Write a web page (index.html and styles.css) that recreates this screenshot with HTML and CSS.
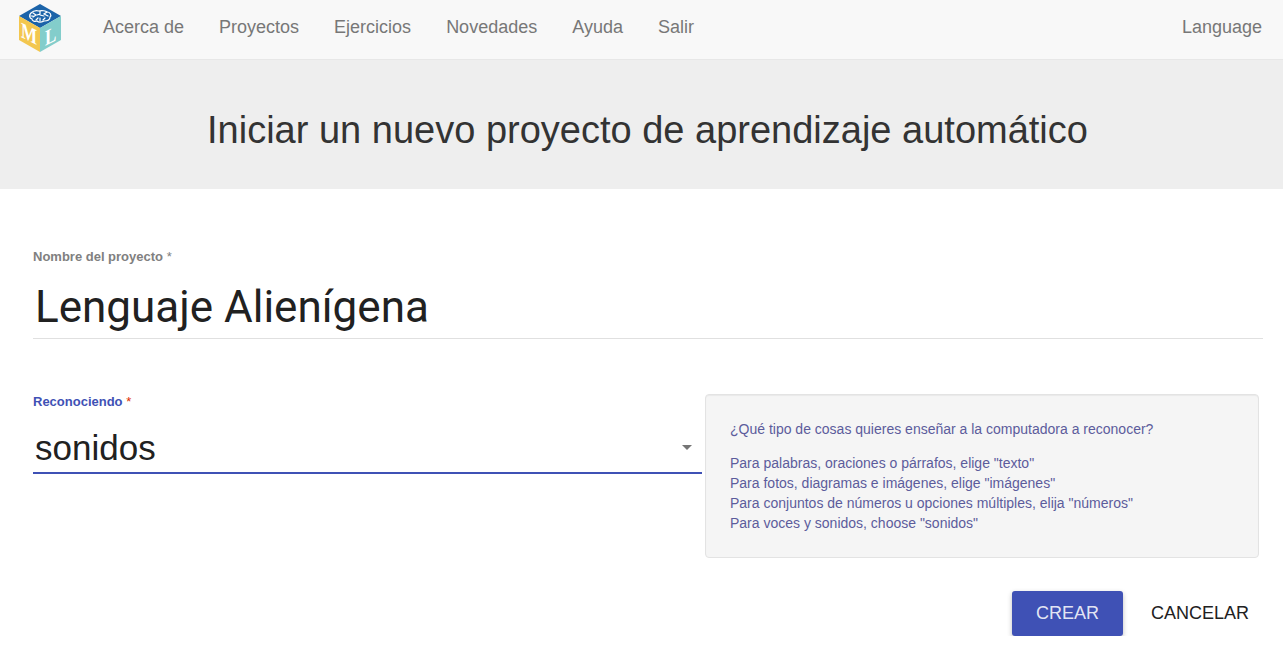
FILE: index.html
```html
<!DOCTYPE html>
<html lang="es">
<head>
<meta charset="utf-8">
<title>Iniciar un nuevo proyecto</title>
<link rel="stylesheet" href="styles.css">
</head>
<body>
<nav class="navbar">
  <a class="brand" href="#" aria-label="Inicio">
    <svg width="44" height="50" viewBox="0 0 44 50">
      <path fill="#1b63a9" d="M22 1 43 13 22 25 1 13Z"/>
      <path fill="#f3c74f" d="M1 13 22 25V49L1 37Z"/>
      <path fill="#83cdcb" d="M43 13 22 25V49L43 37Z"/>
      <g fill="none" stroke="#fff" stroke-width="1.2" stroke-linecap="round">
        <path d="M14 16c-3-1-3-4-1-6 2-2 5-3 8-2 3-1 7 0 8 1 3 0 5 3 3 5 0 3-3 4-6 4-2 1-5 2-7 0-2 1-5 0-5-2Z"/>
        <path d="M22 8v3l-3 1M22 12l4 1M22 15v3M15 10l3 2-3 2M18 17l2-2M29 9l-3 2 4 2M25 17l2-2M12 13h3"/>
      </g>
      <g class="logo-letters">
        <text transform="matrix(1 .5 0 1.3 3 34)">M</text>
        <text transform="matrix(1 -.5 0 1.3 27 43)">L</text>
      </g>
    </svg>
  </a>
  <a class="nav-link" href="#">Acerca de</a>
  <a class="nav-link" href="#">Proyectos</a>
  <a class="nav-link" href="#">Ejercicios</a>
  <a class="nav-link" href="#">Novedades</a>
  <a class="nav-link" href="#">Ayuda</a>
  <a class="nav-link" href="#">Salir</a>
  <a class="nav-link language" href="#">Language</a>
</nav>
<header class="banner">
  <h1 class="title">Iniciar un nuevo proyecto de aprendizaje automático</h1>
</header>
<form class="project-form">
  <div class="field">
    <label class="label" for="name">Nombre del proyecto <span class="star">*</span></label>
    <input class="name-input" id="name" type="text" value="Lenguaje Alienígena">
  </div>
  <div class="type-row">
    <div class="field">
      <label class="label label-active" for="type">Reconociendo <span class="star star-red">*</span></label>
      <div class="select-box">
        <select class="type-select" id="type">
          <option>sonidos</option>
        </select>
        <svg class="arrow" width="10" height="5" viewBox="0 0 10 5"><path fill="#757575" d="M0 0h10L5 5Z"/></svg>
      </div>
    </div>
    <div class="help">
      <p class="help-text">¿Qué tipo de cosas quieres enseñar a la computadora a reconocer?</p>
      <p class="help-text">Para palabras, oraciones o párrafos, elige "texto"<br>Para fotos, diagramas e imágenes, elige "imágenes"<br>Para conjuntos de números u opciones múltiples, elija "números"<br>Para voces y sonidos, choose "sonidos"</p>
    </div>
  </div>
  <div class="actions">
    <button class="button primary" type="submit">CREAR</button>
    <button class="button" type="button">CANCELAR</button>
  </div>
</form>
</body>
</html>
```
FILE: styles.css
```css
* { box-sizing: border-box; }

body {
  margin: 0;
  background: #fff;
  color: #333;
  font-family: "Liberation Sans", Arial, sans-serif;
  font-size: 14px;
  line-height: 20px;
}

.navbar {
  display: flex;
  align-items: flex-start;
  gap: 35px;
  height: 60px;
  padding: 3px 21px 0 18px;
  background: #f8f8f8;
  border-bottom: 1px solid #e7e7e7;
}

.brand { display: block; height: 50px; margin-right: 6px; }

.logo-letters {
  fill: #fff;
  font-family: "Liberation Serif", serif;
  font-size: 17px;
  font-weight: bold;
}

.nav-link {
  padding-top: 14px;
  color: #777;
  font-size: 18px;
  text-decoration: none;
}

.language { margin-left: auto; }

.banner {
  padding: 47px 20px 36px 32px;
  background: #eee;
}

.title {
  margin: 0;
  font-size: 38px;
  font-weight: normal;
  line-height: 46px;
  text-align: center;
}

.project-form { padding: 58px 20px 0 33px; }

.field { display: flex; flex-direction: column; }

.label {
  color: #808080;
  font-size: 13px;
  font-weight: bold;
}

.label-active { color: #3f51b5; }
.star { font-weight: normal; }
.star-red { color: #dd2c00; }

.name-input {
  width: 100%;
  height: 72px;
  padding: 8px 2px 0;
  border: 0;
  border-bottom: 1px solid #e0e0e0;
  outline: 0;
  background: transparent;
  color: #212121;
  font-family: Roboto, sans-serif;
  font-size: 44px;
}

.type-row {
  display: grid;
  grid-template-columns: 669fr 554fr;
  gap: 3px;
  margin: 53px 4px 0 0;
}

.select-box {
  display: flex;
  align-items: center;
  height: 62px;
  padding: 10px 10px 0 2px;
  border-bottom: 2px solid #3f51b5;
}

.type-select {
  flex: 1;
  appearance: none;
  padding: 0;
  border: 0;
  outline: 0;
  background: transparent;
  color: #212121;
  font-family: inherit;
  font-size: 35px;
}

.help {
  margin-top: 2px;
  padding: 24px;
  border: 1px solid #e3e3e3;
  border-radius: 4px;
  background: #f5f5f5;
  box-shadow: inset 0 1px 1px rgba(0, 0, 0, .05);
  color: #5c5c9c;
}

.help-text { margin: 0 0 14px; }
.help-text:last-child { margin: 0; }

.actions {
  display: flex;
  justify-content: flex-end;
  gap: 16px;
  margin-top: 33px;
  padding-right: 2px;
}

.button {
  height: 45px;
  padding: 0 12px;
  border: 0;
  border-radius: 3px;
  background: transparent;
  color: #212121;
  font-family: inherit;
  font-size: 18px;
}

.primary {
  padding: 0 24px;
  background: #3f51b5;
  box-shadow: 0 2px 5px rgba(0, 0, 0, .26);
  color: rgba(255, 255, 255, .87);
}
```
